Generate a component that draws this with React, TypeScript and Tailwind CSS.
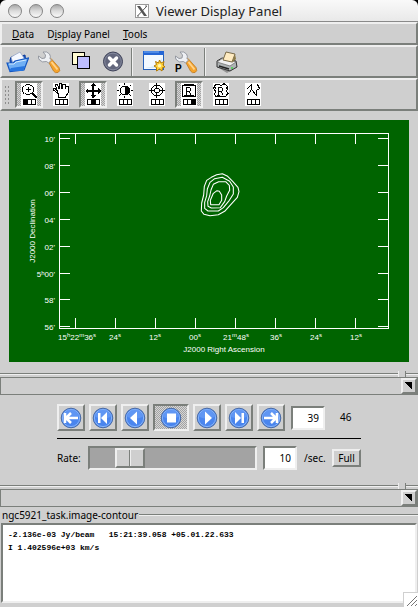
import type { ReactNode } from "react";

const raised = "border-2 border-t-[#efefef] border-l-[#efefef] border-r-[#7b7f7b] border-b-[#7b7f7b]";
const sunken = "border-2 border-t-[#7b7f7b] border-l-[#7b7f7b] border-r-[#efefef] border-b-[#efefef]";
const hatch = "bg-[repeating-conic-gradient(#a3a3a3_0_25%,#d6d6d6_0_50%)] bg-[length:2px_2px]";

function TitleBar() {
  const light =
    "size-[14px] rounded-full border border-[#858585] bg-linear-to-b from-[#a9a9a9] via-[#dcdcdc] to-[#fafafa]";
  return (
    <div className="bg-black">
      <header className="flex h-[22px] items-center rounded-t-[6px] border-b border-[#8a8a8a] bg-linear-to-b from-[#f9f9f9] to-[#e9e9e9] px-2">
        <div className="flex gap-[7px]">
          <button aria-label="Close" className={light} />
          <button aria-label="Minimize" className={light} />
          <button aria-label="Zoom" className={light} />
        </div>
        <div className="ml-[71px] flex items-center gap-[7px]">
          <svg width="14" height="14" viewBox="0 0 14 14" aria-hidden="true">
            <rect x="0.5" y="0.5" width="13" height="13" fill="#fff" stroke="#999" />
            <path d="M2 2h3l7 10H9z" fill="#555" />
            <path d="M12 2 2.500 12" stroke="#555" fill="none" />
            <path d="M10 2h2M2 12h2" stroke="#777" />
          </svg>
          <h1 className="font-['Noto_Sans',sans-serif] text-[13px] leading-5 whitespace-nowrap text-[#222]">Viewer Display Panel</h1>
        </div>
      </header>
    </div>
  );
}

function MenuBar() {
  return (
    <nav className={`flex h-[23px] items-center gap-[13px] pl-[10px] ${raised}`}>
      <button className="leading-4"><u>D</u>ata</button>
      <button className="leading-4">D<u>i</u>splay Panel</button>
      <button className="leading-4"><u>T</u>ools</button>
    </nav>
  );
}

function ToolButton({ label, children }: { label: string; children: ReactNode }) {
  return (
    <button aria-label={label} className="flex size-7 items-center justify-center">
      <svg width="24" height="24" viewBox="0 0 24 24" aria-hidden="true">{children}</svg>
    </button>
  );
}

function Separator() {
  return <div className="mr-[3px] h-7 w-[2px] border-r border-l border-r-[#efefef] border-l-[#7b7f7b]" />;
}

function Wrench() {
  return (
    <>
      <path d="M11 11 14 8.500 22 17.500Q24 21 21 22.500Q18 23.500 16.500 21Z" fill="#f5a32b" stroke="#bd7a25" strokeWidth="0.8" />
      <path d="M14.500 12 20.500 19.500" stroke="#ffd28a" strokeWidth="2" />
      <path d="M6 2Q10 1 12.500 4Q14 6.500 13 8.500L14.500 10 11.500 13 9.500 11.500Q5 13 2.500 10Q1 8 1.500 6L5 8.500 8 8 8.500 5Z" fill="#eef0f4" stroke="#8d929b" strokeWidth="0.9" />
    </>
  );
}

function MainToolBar() {
  return (
    <div role="toolbar" aria-label="Main" className={`flex h-[33px] items-center gap-1 pl-[1px] ${raised}`}>
      <ToolButton label="Open">
        <path d="M5 10 6 7 9 6 10 8 20 5 21 14 6 20Z" fill="#1854c0" stroke="#0c3c9c" />
        <path d="M6 7 15 2 21 11 9 17Z" fill="#f5f8ff" stroke="#98a6c4" strokeWidth="0.8" />
        <path d="M2 13H8L10 11 23.500 8 19 20 5 21.500Z" fill="#70aff4" stroke="#1556bf" strokeWidth="1.200" />
        <path d="M4 14H9L11 12 21 10" stroke="#d0e9ff" strokeWidth="1" fill="none" />
        <path d="M4 21H18L20 16 6 18Z" fill="#2775df" />
      </ToolButton>
      <ToolButton label="Data options"><Wrench /></ToolButton>
      <ToolButton label="Register">
        <g shapeRendering="crispEdges" stroke="#000">
          <rect x="3.500" y="2.500" width="12" height="12" fill="#fffbd2" />
          <rect x="8.500" y="6.500" width="12" height="12" fill="#bdbdff" />
        </g>
      </ToolButton>
      <ToolButton label="Close data">
        <circle cx="12" cy="11.500" r="9.500" fill="#62667c" stroke="#3f435a" />
        <circle cx="12" cy="11.500" r="8.300" fill="none" stroke="#8b90a5" strokeWidth="0.8" />
        <path d="M8.500 8 15.500 15M15.500 8 8.500 15" stroke="#fff" strokeWidth="3.500" strokeLinecap="round" />
      </ToolButton>
      <Separator />
      <ToolButton label="New panel">
        <rect x="1.500" y="1.500" width="20" height="18" fill="#f2f9ff" stroke="#2460b8" />
        <path d="M1 1H22V5H1Z" fill="#2466d5" />
        <path d="M2 2H17" stroke="#76aef5" />
        <path d="M3 18H20V8Q15 17 3 18Z" fill="#d5ebfb" />
        <path d="M17.500 10 19 13 22 11.500 21 15 23 17 20.500 17.500 20 21 17.500 19 14.500 21 14.500 17.500 12 16 14.500 14.500 13.500 11.500 16.500 13Z" fill="#ffd33a" stroke="#b27a08" strokeWidth="1" />
        <circle cx="17.500" cy="15.700" r="1.800" fill="#fff5b5" />
      </ToolButton>
      <ToolButton label="Panel options">
        <Wrench />
        <text x="1" y="22" className="font-['Liberation_Sans',sans-serif] text-[10px] font-bold">P</text>
      </ToolButton>
      <Separator />
      <ToolButton label="Print">
        <path d="M4 18 12 23 22 17V14L4 16Z" fill="#555" opacity="0.5" />
        <path d="M2 11 7 8 21 11 22 17 15 21 2 17Z" fill="#aeb3b4" stroke="#333" />
        <path d="M2 12 15 16 21 12 8 8Z" fill="#f1f1f1" stroke="#666" strokeWidth="0.7" />
        <path d="M8 10 11 2 20 4 17 12Z" fill="#ffebc1" stroke="#7a6b48" />
        <path d="M20 4 21 9 17 13Z" fill="#8c7a45" />
        <path d="M4 16 14 19" stroke="#222" strokeWidth="1.500" />
        <path d="M16 18H18" stroke="#45d64f" strokeWidth="1.500" />
      </ToolButton>
    </div>
  );
}

type Mouse = 0 | 1 | 2 | 3;

function MouseTool({ label, mouse, children }: { label: string; mouse: Mouse; children: ReactNode }) {
  const pressed = mouse > 0;
  return (
    <button
      aria-label={label}
      aria-pressed={pressed}
      className={`flex h-[27px] w-7 items-center justify-center ${pressed ? `${sunken} ${hatch}` : ""}`}
    >
      <svg width="16" height="23" viewBox="0 0 16 23" shapeRendering="crispEdges" aria-hidden="true">
        <rect width="16" height="23" fill="#fff" />
        <g fill="none" stroke="#000">{children}</g>
        <rect x="2.500" y="16.500" width="12" height="5" fill="#fff" stroke="#000" />
        <path d="M6.500 16V22M10.500 16V22" stroke="#000" />
        {pressed && <rect x={mouse * 4 - 1} y="17" width="3" height="4" fill="#000" />}
      </svg>
    </button>
  );
}

function MouseToolBar() {
  return (
    <div role="toolbar" aria-label="Mouse tools" className={`flex h-[33px] items-center gap-1 pl-[2px] ${raised}`}>
      <div className="mr-[1px] h-5 w-[6px] bg-[radial-gradient(#8d8d8d_25%,#e4e4e4_30%,transparent_50%)] bg-[length:3px_4px]" />
      <MouseTool label="Zoom" mouse={1}>
        <path d="M5 1.500H9M3.500 2.500H5M9 2.500H11M2.500 4V3M1.500 4V9M2.500 9V11M3.500 10.500H5M5 11.500H9M9 10.500H11M11.500 9V10M12.500 4V9M11.500 3V4" />
        <path d="M7.500 4V9M5 6.500H10" />
        <path d="M11 10 16 15" strokeWidth="2" />
      </MouseTool>
      <MouseTool label="Pan" mouse={0}>
        <path d="M5.500 14V11L.500 7V5H2L4 8V7L2.500 3V1H4L6 5.500V1L8 .500 9 5.500 10 1H12L12.500 6 13 3 15 3.500V10L12.500 14Z" />
      </MouseTool>
      <MouseTool label="Translate" mouse={2}>
        <path d="M8 1V15M1 8H15" strokeWidth="2" />
        <path d="M8 0 11 3H5ZM8 15 5 12H11ZM0 8 3 5V11ZM16 8 13 5V11Z" fill="#000" stroke="none" />
      </MouseTool>
      <MouseTool label="Contrast" mouse={0}>
        <circle cx="8" cy="7.500" r="4.500" />
        <path d="M8 3A4.500 4.500 0 0 1 8 12Z" fill="#000" />
        <path d="M7.500 0V2M7.500 13V15M0 7.500H2M14 7.500H16M2 2 3.500 3.500M14 2 12.500 3.500M2 13 3.500 11.500M14 13 12.500 11.500" />
      </MouseTool>
      <MouseTool label="Position" mouse={0}>
        <circle cx="8" cy="7.500" r="5.500" />
        <circle cx="8" cy="7.500" r="2.500" />
        <path d="M7.500 0V5M7.500 10V15M0 7.500H5M11 7.500H16" />
      </MouseTool>
      <MouseTool label="Rectangle region" mouse={3}>
        <path d="M1.500 2.500H14.500V13.500H1.500ZM3 1.500H13M3 12.500H13" />
        <path d="M6 4.500H9M5.500 4V12M6 8.500H9M9.500 5V8M8.500 9V10M9.500 10V12" />
      </MouseTool>
      <MouseTool label="Polygon region" mouse={0}>
        <path d="M2.500 1.500H6L8.500 2.500 11 .500 14.500 3.500V6L13.500 8 15 10.500 12.500 13.500H8L3.500 14 1.500 11.500 2.500 8 .500 5.500Z" />
        <path d="M2.500 3.500V6M3.500 12.500H7M13.500 4V6" />
        <path d="M6 4.500H9M5.500 4V12M6 8.500H9M9.500 5V8M8.500 9V10M9.500 10V12" />
      </MouseTool>
      <MouseTool label="Polyline" mouse={0}>
        <path d="M1.500 6.500 6.500 1.500V6.500L2.500 12.500M6.500 6.500 11.500 12.500V7.500L14.500 5.500 12.500 1.500" />
      </MouseTool>
    </div>
  );
}

const xTicks = [75, 115, 155, 195, 235, 275, 315, 355];
const yTicks = [138, 165, 192, 219, 246, 273, 299, 326];
const yLabels = ["10'", "08'", "06'", "04'", "02'", "", "58'", "56'"];
const xLabels = [[115, "24"], [155, "12"], [195, "00"], [276, "36"], [316, "24"], [356, "12"]] as const;

function Plot() {
  return (
    <svg viewBox="9 120 400 242" className="mx-[9px] mt-[9px] block bg-[#006400]" role="img" aria-label="Contour plot">
      <g fill="none" stroke="#fff" shapeRendering="crispEdges">
        <rect x="59.500" y="133.500" width="329" height="195" />
        {xTicks.map((x) => (
          <path key={x} d={`M${x + 0.5} 133V144M${x + 0.5} 318V328`} />
        ))}
        {yTicks.map((y) => (
          <path key={y} d={`M59 ${y + 0.5}H70M378 ${y + 0.5}H388`} />
        ))}
      </g>
      <g transform="translate(190 165) scale(0.3333)" fill="none" stroke="#fff" strokeWidth="3.200" strokeLinejoin="round">
        <path d="M97 26 80 29 64 37 50 46 43 64 41 90 35 114 34 138 42 148 60 152 85 149 104 139 125 116 142 97 147 80 144 67 128 49 113 34Z" />
        <path d="M97 37 74 41 60 52 52 72 50 92 44 112 44 130 54 138 85 138 100 128 118 106 130 87 130 66 119 49Z" />
        <path d="M107 50H86L70 58 63 75 59 93 53 110 54 124 64 129 91 128 104 110 110 93 119 76 118 61Z" />
        <path d="M81 77 88 79 95 90 95 106 87 119H62L61 106 70 85Z" />
      </g>
      <g fill="#fff" className="font-['Liberation_Sans',sans-serif] text-[8px]">
        {yLabels.map((t, i) => (
          <text key={i} x="55" y={yTicks[i] + 4} textAnchor="end">{t}</text>
        ))}
        <text x="55" y="277" textAnchor="end">5<tspan dy="-2" fontSize="6">h</tspan><tspan dy="2">00'</tspan></text>
        <text x="58" y="340">
          15<tspan dy="-3" fontSize="6">h</tspan><tspan dy="3">22</tspan><tspan dy="-3" fontSize="6">m</tspan><tspan dy="3">36</tspan><tspan dy="-3" fontSize="6">s</tspan>
        </text>
        {xLabels.map(([x, t]) => (
          <text key={x} x={x} y="340" textAnchor="middle">{t}<tspan dy="-3" fontSize="6">s</tspan></text>
        ))}
        <text x="236" y="340" textAnchor="middle">
          21<tspan dy="-3" fontSize="6">m</tspan><tspan dy="3">48</tspan><tspan dy="-3" fontSize="6">s</tspan>
        </text>
        <text x="224" y="352" textAnchor="middle">J2000 Right Ascension</text>
        <text transform="translate(35 231) rotate(-90)" textAnchor="middle">J2000 Declination</text>
      </g>
    </svg>
  );
}

function DockEdge({ label }: { label: string }) {
  const groove = "h-[2px] border-t border-b border-t-[#7b7f7b] border-b-[#efefef]";
  return (
    <div>
      <div className="flex h-[6px] items-center">
        <div className={`flex-1 ${groove}`} />
        <div className="mr-[6px] h-full w-px bg-[#efefef]" />
        <div className="h-full w-px bg-[#7b7f7b]" />
        <div className={`w-3 ${groove}`} />
      </div>
      <div className="flex h-[18px] justify-end border border-[#7b7f7b]">
        <button aria-label={label} className={`flex size-4 items-center justify-center ${raised}`}>
          <svg width="8" height="8" viewBox="0 0 8 8" shapeRendering="crispEdges" aria-hidden="true">
            <path d="M0 0H7V8Z" />
          </svg>
        </button>
      </div>
    </div>
  );
}

function PlayButton({ label, pressed = false, children }: { label: string; pressed?: boolean; children: ReactNode }) {
  return (
    <button
      aria-label={label}
      className={`flex h-[27px] items-center justify-center ${pressed ? `w-9 ${sunken} ${hatch}` : `w-7 ${raised}`}`}
    >
      <svg width="22" height="22" viewBox="0 0 22 22" className="shrink-0" aria-hidden="true">
        <circle cx="11" cy="11" r="9.800" fill="#4a85ee" stroke="#4a6ba6" />
        <circle cx="11" cy="11" r="8.600" fill="none" stroke="#86b4fa" strokeWidth="1" />
        <path d="M3.500 10A7.500 7.500 0 0 1 18.500 10Q11 13 3.500 10Z" fill="#6a9df5" opacity="0.7" />
        <g fill="#fff" stroke="#fff" strokeWidth="0">{children}</g>
      </svg>
    </button>
  );
}

const field = `bg-white pr-1 text-right outline-none ${sunken}`;

function Animator() {
  return (
    <section aria-label="Animator" className="mx-auto mt-[9px] w-[304px]">
      <div className="flex items-center gap-1 border-b border-black pb-[7px]">
        <PlayButton label="To start">
          <path d="M5 6V16M6 11 11 6M6 11 11 16M6 11H18" strokeWidth="2.500" fill="none" />
        </PlayButton>
        <PlayButton label="Reverse step">
          <path d="M6 6H8.500V16H6ZM15 5V17L9 11Z" />
        </PlayButton>
        <PlayButton label="Reverse play">
          <path d="M13 4.500V17.500L6 11Z" />
        </PlayButton>
        <PlayButton label="Stop" pressed>
          <path d="M7 6.500H16V15.500H7Z" />
        </PlayButton>
        <PlayButton label="Forward play">
          <path d="M9 4.500V17.500L16 11Z" />
        </PlayButton>
        <PlayButton label="Forward step">
          <path d="M7 5V17L13 11ZM13.500 6H16V16H13.500Z" />
        </PlayButton>
        <PlayButton label="To end">
          <path d="M17 6V16M16 11 11 6M16 11 11 16M16 11H4" strokeWidth="2.500" fill="none" />
        </PlayButton>
        <input aria-label="Frame" defaultValue="39" className={`ml-[2px] h-6 w-[34px] ${field}`} />
        <span className="ml-[11px]">46</span>
      </div>
      <div className="mt-[7px] flex items-center">
        <label htmlFor="rate" className="w-[31px] whitespace-nowrap">Rate:</label>
        <input
          id="rate"
          type="range"
          min="1"
          max="50"
          defaultValue="10"
          className={`h-6 w-[169px] appearance-none bg-[#a3a3a3] ${sunken} [&::-webkit-slider-thumb]:h-5 [&::-webkit-slider-thumb]:w-[30px] [&::-webkit-slider-thumb]:appearance-none [&::-webkit-slider-thumb]:border-2 [&::-webkit-slider-thumb]:border-t-[#efefef] [&::-webkit-slider-thumb]:border-l-[#efefef] [&::-webkit-slider-thumb]:border-r-[#7b7f7b] [&::-webkit-slider-thumb]:border-b-[#7b7f7b] [&::-webkit-slider-thumb]:bg-[linear-gradient(90deg,#cfcfcf_12px,#7b7f7b_12px,#7b7f7b_13px,#efefef_13px,#efefef_14px,#cfcfcf_14px)]`}
        />
        <input aria-label="Frames per second" defaultValue="10" className={`ml-[6px] h-6 w-[34px] ${field}`} />
        <span className="ml-[7px]">/sec.</span>
        <button className={`ml-auto h-[18px] w-[29px] leading-[14px] ${raised}`}>Full</button>
      </div>
    </section>
  );
}

function Readout() {
  return (
    <section className="relative flex flex-1 flex-col pb-1">
      <div className="flex h-4 items-center gap-[1px] pl-[2px]">
        <label htmlFor="readout" className="leading-4 whitespace-nowrap">ngc5921_task.image-contour</label>
        <div className="h-[2px] flex-1 border-t border-b border-t-[#7b7f7b] border-b-[#efefef]" />
      </div>
      <textarea
        id="readout"
        readOnly
        value={"-2.136e-03 Jy/beam   15:21:39.058 +05.01.22.633\nI 1.402596e+03 km/s"}
        className={`mx-[1px] block min-h-20 flex-1 resize-none overflow-hidden bg-white px-[5px] py-[3px] font-['Liberation_Mono',monospace] text-[8px] leading-[13px] font-bold outline-none ${sunken}`}
      />
      <svg width="15" height="15" viewBox="0 0 15 15" className="absolute right-0 bottom-0" aria-hidden="true">
        <rect width="15" height="15" fill="#fff" />
        <path d="M0 .500H15M.500 0V15" stroke="#d0d0d0" />
        <path d="M4 14 14 4M8 14 14 8M12 14 14 12" stroke="#777" />
      </svg>
    </section>
  );
}

export default function App() {
  return (
    <div className="flex min-h-screen flex-col bg-[#cfcfcf] font-['Noto_Sans',sans-serif] text-[10px] text-black">
      <TitleBar />
      <MenuBar />
      <MainToolBar />
      <MouseToolBar />
      <Plot />
      <div className="mt-[9px]"><DockEdge label="Float position tracking" /></div>
      <Animator />
      <div className="mt-[13px]"><DockEdge label="Float animator" /></div>
      <Readout />
    </div>
  );
}
